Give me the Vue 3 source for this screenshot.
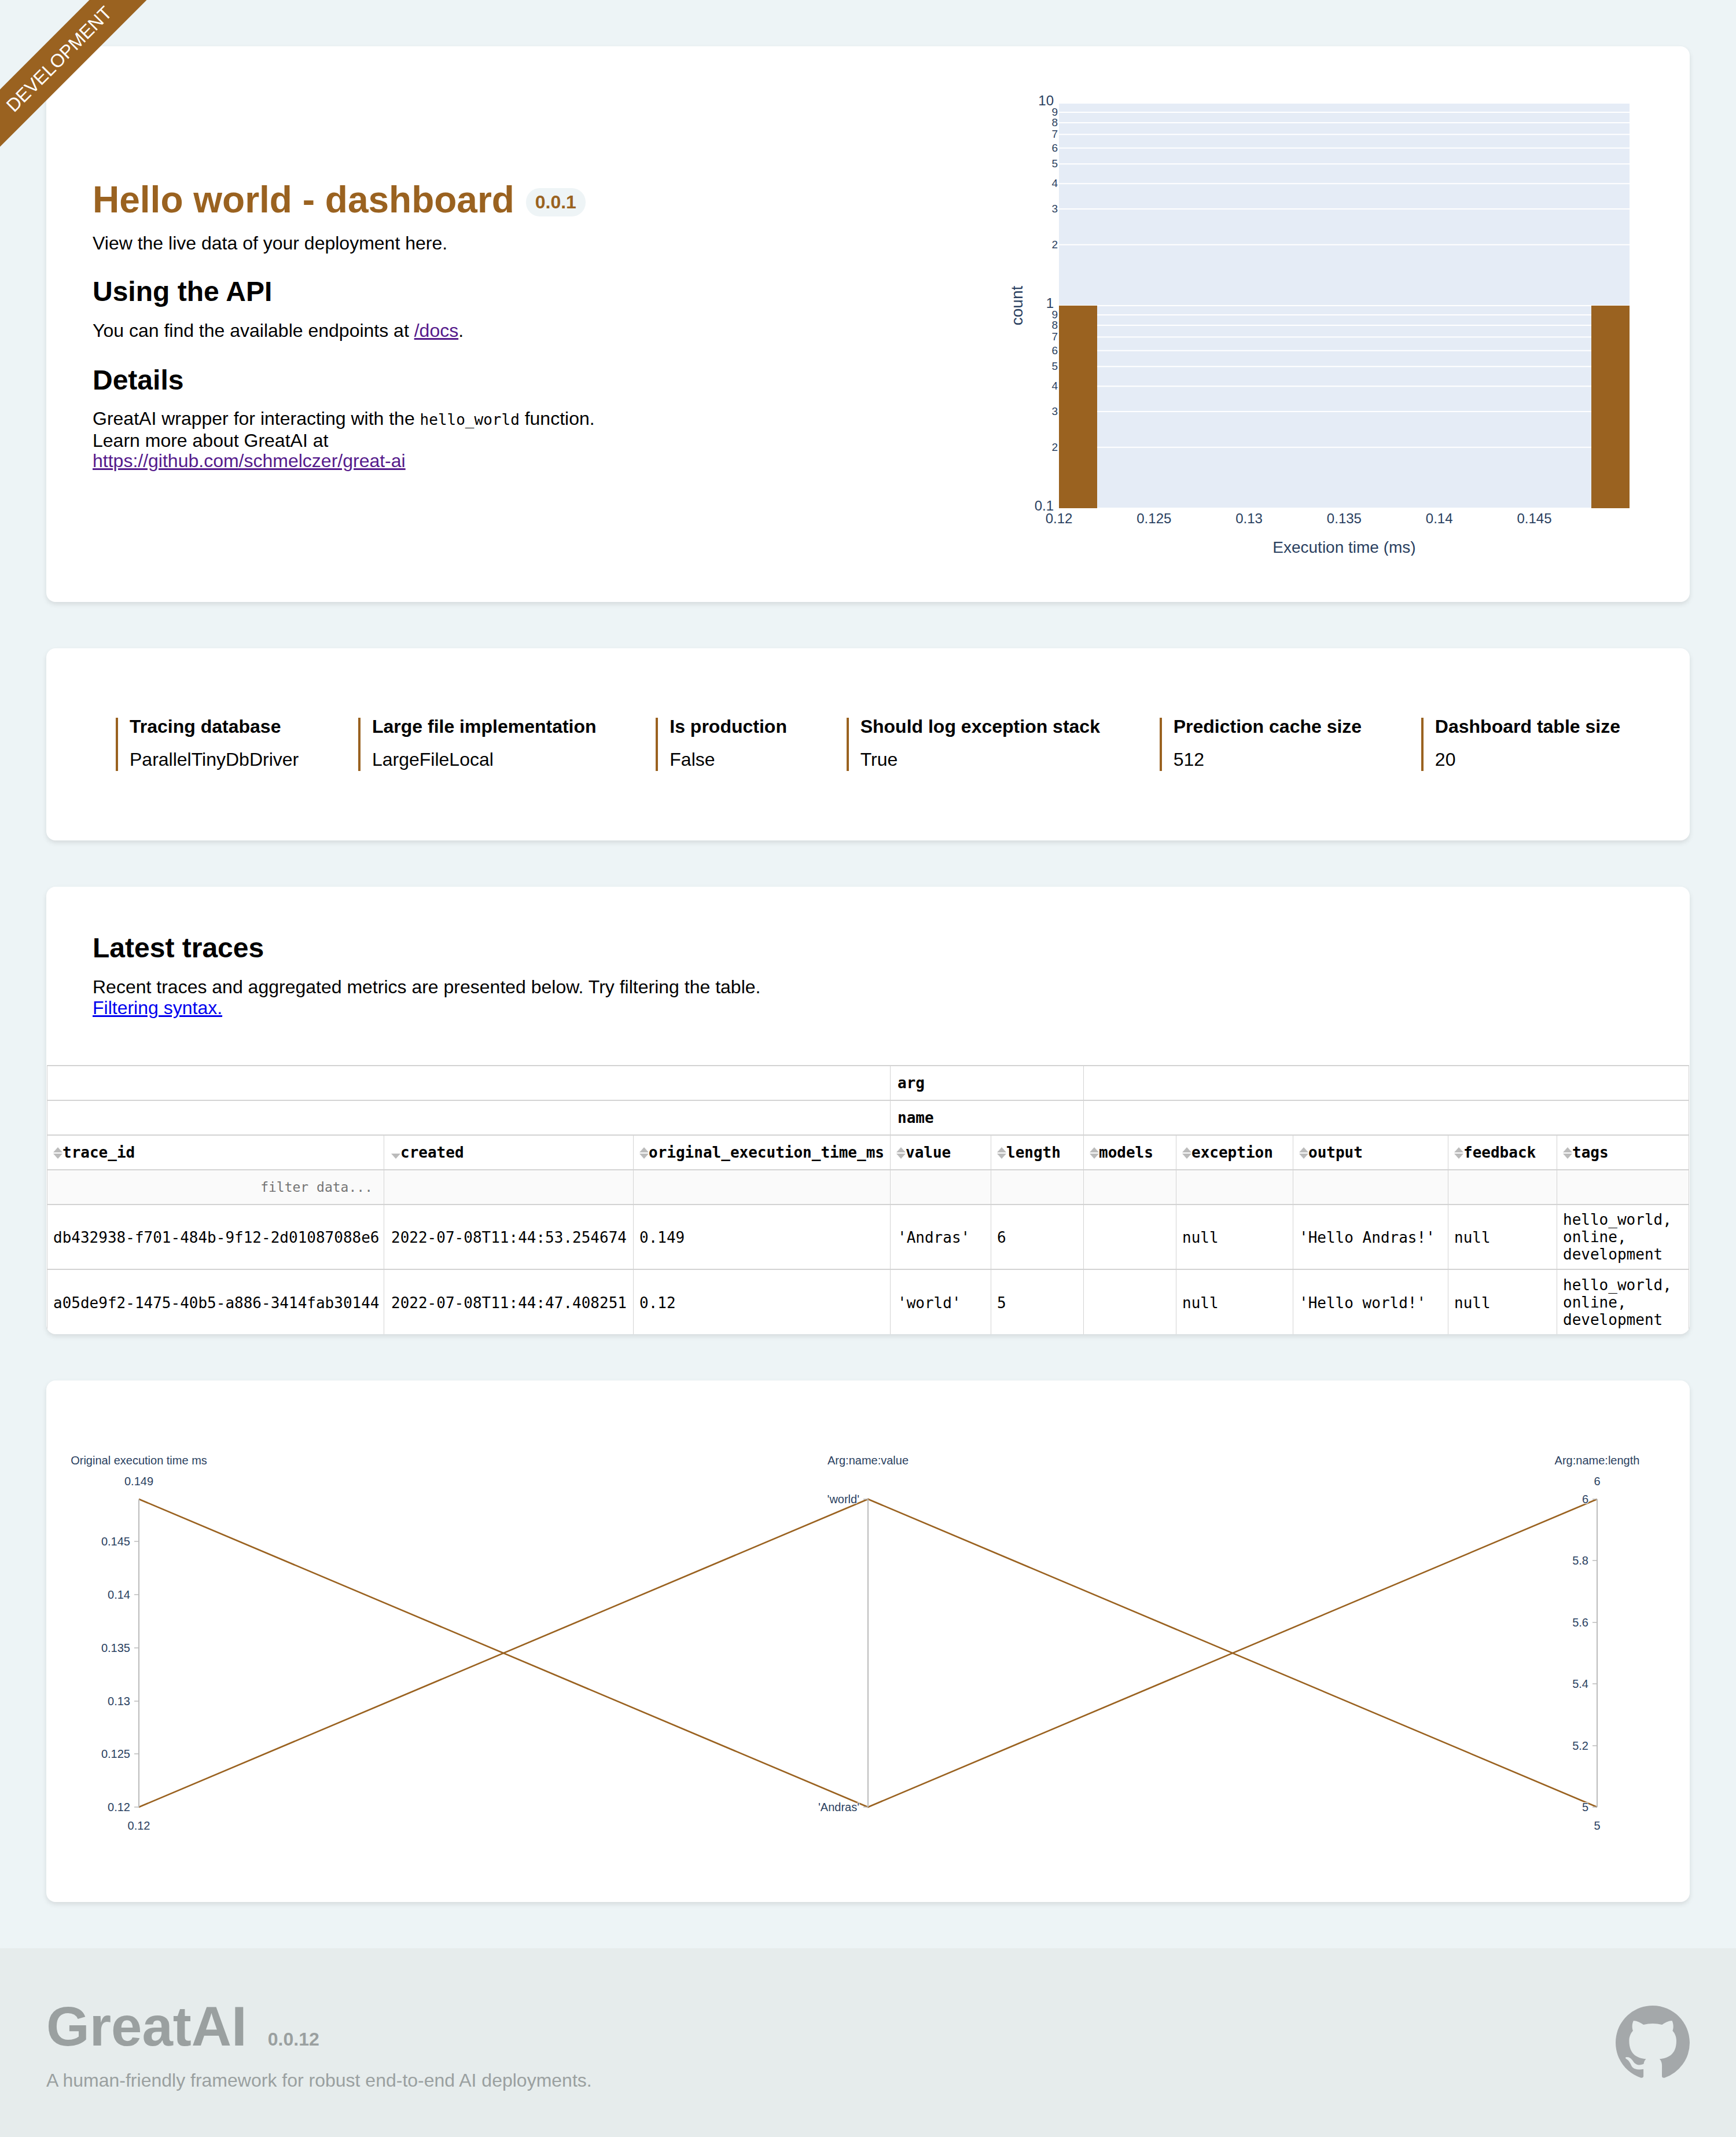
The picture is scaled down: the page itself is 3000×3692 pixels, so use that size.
<template>
  <div class="page">
    <div class="ribbon-wrap">
      <div class="ribbon">DEVELOPMENT</div>
    </div>

    <main class="content">
      <section class="card intro">
        <div class="intro-text">
          <h1>Hello world - dashboard <span class="badge">0.0.1</span></h1>
          <p>View the live data of your deployment here.</p>
          <h2>Using the API</h2>
          <p>You can find the available endpoints at <a class="visited" href="#">/docs</a>.</p>
          <h2 class="details-title">Details</h2>
          <p class="details-text">
            GreatAI wrapper for interacting with the <code>hello_world</code> function.<br />
            Learn more about GreatAI at<br />
            <a class="visited" href="#">https://github.com/schmelczer/great-ai</a>
          </p>
        </div>

        <svg class="histogram" viewBox="1700 160 1140 800" width="1140" height="800">
          <rect x="1830" y="178" width="986" height="700" fill="#e5ecf6" />
          <line
            v-for="g in logTicks"
            :key="g.label + g.y"
            x1="1830"
            x2="2816"
            :y1="g.y"
            :y2="g.y"
            stroke="#fff"
            stroke-width="2"
          />
          <rect x="1830" y="528" width="66" height="350" fill="#9a6220" />
          <rect x="2750" y="528" width="66" height="350" fill="#9a6220" />
          <text
            v-for="g in logTicks"
            :key="'t' + g.label + g.y"
            :x="g.big ? 1821 : 1828"
            :y="g.y + (g.big ? 4 : 6)"
            :font-size="g.big ? 24 : 19"
            text-anchor="end"
            class="plot-text"
          >{{ g.label }}</text>
          <text
            v-for="t in xTicks"
            :key="t.label"
            :x="t.x"
            y="904"
            font-size="24"
            text-anchor="middle"
            class="plot-text"
          >{{ t.label }}</text>
          <text x="2323" y="955" font-size="28" text-anchor="middle" class="plot-text">Execution time (ms)</text>
          <text
            x="1767"
            y="528"
            font-size="28"
            text-anchor="middle"
            transform="rotate(-90 1767 528)"
            class="plot-text"
          >count</text>
        </svg>
      </section>

      <section class="card config">
        <div v-for="item in config" :key="item.name" class="config-item">
          <strong>{{ item.name }}</strong>
          <span>{{ item.value }}</span>
        </div>
      </section>

      <section class="card traces">
        <div class="traces-head">
          <h2>Latest traces</h2>
          <p>
            Recent traces and aggregated metrics are presented below. Try filtering the table.<br />
            <a href="#">Filtering syntax.</a>
          </p>
        </div>
        <table>
          <colgroup>
            <col v-for="w in colWidths" :key="w.id" :style="{ width: w.px + 'px' }" />
          </colgroup>
          <thead>
            <tr>
              <th colspan="3"></th>
              <th colspan="2">arg</th>
              <th colspan="5"></th>
            </tr>
            <tr>
              <th colspan="3"></th>
              <th colspan="2">name</th>
              <th colspan="5"></th>
            </tr>
            <tr class="names">
              <th v-for="col in columns" :key="col">
                <svg class="sort" width="16" height="20" viewBox="0 0 16 20">
                  <path v-if="col !== 'created'" d="M8 0l8 9H0z" />
                  <path d="M0 11h16L8 20z" />
                </svg>{{ col }}
              </th>
            </tr>
            <tr class="filters">
              <th class="filter-hint">filter data...</th>
              <th v-for="n in 9" :key="n"></th>
            </tr>
          </thead>
          <tbody>
            <tr v-for="row in rows" :key="row[0]">
              <td v-for="(cell, i) in row" :key="i">{{ cell }}</td>
              <td class="tags">hello_world,<br />online,<br />development</td>
            </tr>
          </tbody>
        </table>
      </section>

      <section class="card parallel">
        <svg viewBox="80 2385 2840 901" width="2840" height="901">
          <polyline points="240,2590 1500,3122 2760,2590" class="trace-line" />
          <polyline points="240,3122 1500,2590 2760,3122" class="trace-line" />
          <g v-for="axis in axes" :key="axis.title">
            <line :x1="axis.x" :x2="axis.x" y1="2590" y2="3122" stroke="#bbb" stroke-width="2" />
            <text :x="axis.x" y="2530" font-size="20" text-anchor="middle" class="plot-text">{{ axis.title }}</text>
            <text :x="axis.x" y="2566" font-size="20" text-anchor="middle" class="plot-text">{{ axis.top }}</text>
            <text :x="axis.x" y="3161" font-size="20" text-anchor="middle" class="plot-text">{{ axis.bottom }}</text>
            <g v-for="t in axis.ticks" :key="t.label">
              <line :x1="axis.x - 8" :x2="axis.x" :y1="t.y" :y2="t.y" stroke="#bbb" stroke-width="1.5" />
              <text :x="axis.x - 15" :y="t.y + 7" font-size="20" text-anchor="end" class="plot-text halo">{{ t.label }}</text>
            </g>
          </g>
        </svg>
      </section>
    </main>

    <footer class="footer">
      <div>
        <div class="brand">
          <span class="brand-name">GreatAI</span>
          <span class="brand-version">0.0.12</span>
        </div>
        <p>A human-friendly framework for robust end-to-end AI deployments.</p>
      </div>
      <svg class="github" viewBox="0 0 16 16" width="128" height="128">
        <path
          fill-rule="evenodd"
          d="M8 0C3.58 0 0 3.58 0 8c0 3.54 2.29 6.53 5.47 7.59.4.07.55-.17.55-.38 0-.19-.01-.82-.01-1.49-2.01.37-2.53-.49-2.69-.94-.09-.23-.48-.94-.82-1.13-.28-.15-.68-.52-.01-.53.63-.01 1.08.58 1.23.82.72 1.21 1.87.87 2.33.66.07-.52.28-.87.51-1.07-1.78-.2-3.64-.89-3.64-3.95 0-.87.31-1.59.82-2.15-.08-.2-.36-1.02.08-2.12 0 0 .67-.21 2.2.82.64-.18 1.32-.27 2-.27.68 0 1.36.09 2 .27 1.53-1.04 2.2-.82 2.2-.82.44 1.1.16 1.92.08 2.12.51.56.82 1.27.82 2.15 0 3.07-1.87 3.75-3.65 3.95.29.25.54.73.54 1.48 0 1.07-.01 1.93-.01 2.2 0 .21.15.46.55.38A8.013 8.013 0 0016 8c0-4.42-3.58-8-8-8z"
        />
      </svg>
    </footer>
  </div>
</template>

<script setup>
const decadeY = (v) => 528 - 350 * Math.log10(v)

const logTicks = []
for (const base of [1, 0.1]) {
  for (const n of [2, 3, 4, 5, 6, 7, 8, 9]) {
    logTicks.push({ label: String(n), y: decadeY(base * n), big: false })
  }
}
logTicks.push({ label: '10', y: 178, big: true })
logTicks.push({ label: '1', y: 528, big: true })
logTicks.push({ label: '0.1', y: 878, big: true })

const xTicks = ['0.12', '0.125', '0.13', '0.135', '0.14', '0.145'].map((label, i) => ({
  label,
  x: 1830 + i * 164.3
}))

const config = [
  { name: 'Tracing database', value: 'ParallelTinyDbDriver' },
  { name: 'Large file implementation', value: 'LargeFileLocal' },
  { name: 'Is production', value: 'False' },
  { name: 'Should log exception stack', value: 'True' },
  { name: 'Prediction cache size', value: '512' },
  { name: 'Dashboard table size', value: '20' }
]

const columns = [
  'trace_id',
  'created',
  'original_execution_time_ms',
  'value',
  'length',
  'models',
  'exception',
  'output',
  'feedback',
  'tags'
]

const colWidths = [582, 431, 444, 174, 160, 160, 202, 268, 188, 228].map((px, id) => ({ id, px }))

const rows = [
  ['db432938-f701-484b-9f12-2d01087088e6', '2022-07-08T11:44:53.254674', '0.149', "'Andras'", '6', '', 'null', "'Hello Andras!'", 'null'],
  ['a05de9f2-1475-40b5-a886-3414fab30144', '2022-07-08T11:44:47.408251', '0.12', "'world'", '5', '', 'null', "'Hello world!'", 'null']
]

const axes = [
  {
    title: 'Original execution time ms',
    x: 240,
    top: '0.149',
    bottom: '0.12',
    ticks: [
      { label: '0.145', y: 2663 },
      { label: '0.14', y: 2755 },
      { label: '0.135', y: 2847 },
      { label: '0.13', y: 2939 },
      { label: '0.125', y: 3030 },
      { label: '0.12', y: 3122 }
    ]
  },
  {
    title: 'Arg:name:value',
    x: 1500,
    top: '',
    bottom: '',
    ticks: [
      { label: "'world'", y: 2590 },
      { label: "'Andras'", y: 3122 }
    ]
  },
  {
    title: 'Arg:name:length',
    x: 2760,
    top: '6',
    bottom: '5',
    ticks: [
      { label: '6', y: 2590 },
      { label: '5.8', y: 2696 },
      { label: '5.6', y: 2803 },
      { label: '5.4', y: 2909 },
      { label: '5.2', y: 3016 },
      { label: '5', y: 3122 }
    ]
  }
]
</script>

<style>
html,
body {
  margin: 0;
  background: #edf4f6;
}
</style>

<style scoped>
.page {
  position: relative;
  width: 3000px;
  height: 3692px;
  overflow: hidden;
  display: flex;
  flex-direction: column;
  font-family: "Liberation Sans", Arial, sans-serif;
  font-size: 32px;
  color: #000;
  background: #edf4f6;
}

.ribbon-wrap {
  position: absolute;
  top: 0;
  left: 0;
  width: 300px;
  height: 300px;
  overflow: hidden;
  z-index: 2;
}
.ribbon {
  position: absolute;
  left: -98px;
  top: 67px;
  width: 400px;
  height: 70px;
  line-height: 70px;
  text-align: center;
  transform: rotate(-45deg);
  background: #9a6220;
  color: #fff;
  font-size: 32px;
}

.content {
  flex: 1;
  display: flex;
  flex-direction: column;
  gap: 80px;
  padding: 80px 80px 0;
}

.card {
  background: #fff;
  border-radius: 16px;
  box-shadow: 0 4px 8px rgba(0, 0, 0, 0.1);
  overflow: hidden;
}

h1,
h2,
p {
  margin: 0;
}
p {
  line-height: 36px;
}
h1 {
  font-size: 64px;
  line-height: 74px;
  color: #9a6220;
  margin-bottom: 20px;
}
h2 {
  font-size: 48px;
  margin: 38px 0 22px;
}
.intro-text {
  padding-top: 3px;
}
.details-title {
  margin-top: 40px;
}
.details-text {
  line-height: 35.5px;
}
code {
  font-family: "DejaVu Sans Mono", monospace;
  font-size: 26px;
}
a {
  color: #0000ee;
}
a.visited {
  color: #551a8b;
}

.badge {
  display: inline-block;
  vertical-align: 7px;
  margin-left: 2px;
  font-size: 32px;
  line-height: 49px;
  padding: 0 16px;
  border-radius: 24px;
  background: #eef4f6;
}

.intro {
  height: 960px;
  box-sizing: border-box;
  padding: 80px;
  display: flex;
  justify-content: space-between;
  align-items: center;
}
.histogram {
  display: block;
  flex-shrink: 0;
}
.plot-text {
  fill: #2a3f5f;
}
.halo {
  text-shadow: 1px 1px 1px #fff, -1px -1px 1px #fff, 1px -1px 1px #fff, -1px 1px 1px #fff;
}

.config {
  height: 332px;
  box-sizing: border-box;
  padding: 120px;
  display: flex;
  justify-content: space-between;
  align-items: center;
}
.config-item {
  display: flex;
  flex-direction: column;
  gap: 23px;
  padding: 0 0 1px 20px;
  border-left: 4px solid #9a6220;
}
.config-item strong {
  line-height: 31px;
}

.traces-head {
  padding: 78px 80px 81px;
}
.traces-head h2 {
  margin: 0 0 22px;
}
table {
  table-layout: fixed;
  width: 2838px;
  margin-left: 1px;
  border-collapse: collapse;
  font-family: "DejaVu Sans Mono", monospace;
  font-size: 26px;
}
th,
td {
  padding: 0 10px;
  text-align: left;
  white-space: nowrap;
  border-left: 1px solid #d3d3d3;
  border-right: 1px solid #d3d3d3;
  border-top: 2px solid #d3d3d3;
  border-bottom: 2px solid #d3d3d3;
}
th {
  height: 58px;
  font-weight: bold;
}
td {
  height: 108px;
  padding-top: 2px;
  line-height: 30px;
}
td.tags {
  height: 110px;
  padding-top: 0;
}
th:nth-child(2),
td:nth-child(2),
td:nth-child(4) {
  padding-left: 12px;
}
.filters th {
  padding-left: 10px;
  background: #fafafa;
}
tbody tr:last-child td {
  height: 109px;
  border-bottom: none;
}
tbody tr:last-child td.tags {
  height: 111px;
}
.sort {
  vertical-align: -2px;
}
.sort path {
  fill: #bbb;
}
.filter-hint {
  text-align: right;
  padding-right: 19px;
  font-size: 23px;
  font-weight: normal;
  color: #757575;
}

.parallel svg {
  display: block;
}
.trace-line {
  fill: none;
  stroke: #9a6220;
  stroke-width: 2.6;
}

.footer {
  height: 326px;
  box-sizing: border-box;
  padding: 0 80px;
  margin-top: 79px;
  display: flex;
  justify-content: space-between;
  align-items: center;
  background: #e6ecec;
  color: #9aa0a0;
}
.brand {
  display: flex;
  align-items: baseline;
  gap: 36px;
  font-weight: bold;
}
.brand-name {
  font-size: 96px;
}
.footer p {
  margin-top: 20px;
}
.github {
  flex-shrink: 0;
  fill: #a4a8aa;
}
</style>
